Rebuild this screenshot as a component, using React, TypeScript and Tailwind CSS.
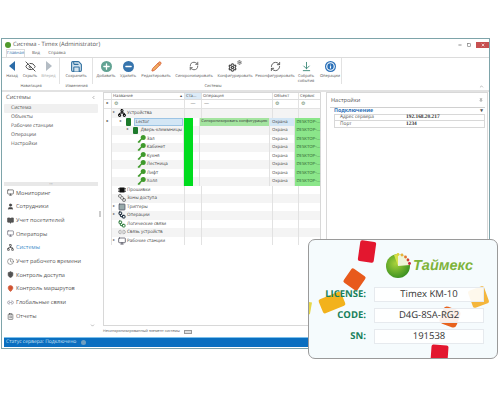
import {
  ArrowDownToLine,
  BookOpen,
  ChevronDown,
  ChevronLeft,
  ChevronUp,
  Clock,
  ClipboardList,
  EyeOff,
  Info,
  Link2,
  MapPin,
  Minus,
  Monitor,
  Network,
  Pencil,
  Pin,
  Plus,
  RefreshCw,
  Save,
  Settings,
  ShieldCheck,
  SquareStack,
  User,
  Workflow,
  X,
  Square,
} from "lucide-react";
import type { ReactNode } from "react";

const ribbon: { label: ReactNode; width: string; icon: ReactNode; sep?: boolean; muted?: boolean }[] = [
  { label: "Назад", width: "w-[20px]", icon: <div className="h-0 w-0 border-y-[5px] border-r-[6px] border-y-transparent border-r-[#2b6ca8]" /> },
  { label: "Скрыть", width: "w-[16px]", icon: <EyeOff size={11} className="text-[#444]" /> },
  { label: "Вперед", width: "w-[22px]", muted: true, sep: true, icon: <div className="h-0 w-0 border-y-[5px] border-l-[6px] border-y-transparent border-l-[#b4bcc4]" /> },
  { label: "Сохранить", width: "w-[33px]", sep: true, icon: <Save size={13} className="fill-[#d5e4ee] text-[#2f6f9f]" /> },
  { label: "Добавить", width: "w-[26px]", icon: <div className="flex h-[11px] w-[11px] items-center justify-center rounded-full bg-[#62a393]"><Plus size={9} strokeWidth={3.5} className="text-white" /></div> },
  { label: "Удалить", width: "w-[18px]", icon: <div className="flex h-[11px] w-[11px] items-center justify-center rounded-full bg-[#3674ad]"><Minus size={9} strokeWidth={3.5} className="text-white" /></div> },
  { label: "Редактировать", width: "w-[38px]", icon: <Pencil size={11} className="fill-[#f0b060] text-[#d9603a]" /> },
  { label: "Синхронизировать", width: "w-[38px]", icon: <RefreshCw size={10} className="text-[#555]" /> },
  {
    label: "Конфигурировать",
    width: "w-[44px]",
    icon: (
      <div className="flex items-start">
        <Settings size={9} strokeWidth={3} className="mt-[3px] text-[#444]" />
        <Settings size={5} strokeWidth={3} className="text-[#555]" />
      </div>
    ),
  },
  { label: "Реконфигурировать", width: "w-[36px]", icon: <RefreshCw size={11} className="text-[#555]" /> },
  { label: <>Собрать<br />события</>, width: "w-[26px]", icon: <ArrowDownToLine size={11} className="text-[#3d8a7a]" /> },
  { label: "Операции", width: "w-[23px]", sep: true, icon: <div className="flex h-[11px] w-[11px] items-center justify-center rounded-full bg-[#2a70b8]"><Info size={9} strokeWidth={3} className="text-white" /></div> },
];

const groups = [
  { label: "Навигация", width: "w-[58px]" },
  { label: "Изменения", width: "w-[33px]" },
  { label: "Системы", width: "w-[240px]" },
];

const sideItems = ["Система", "Объекты", "Рабочие станции", "Операции", "Настройки"];

const navItems: { label: string; icon: ReactNode; active?: boolean }[] = [
  { label: "Мониторинг", icon: <Monitor size={7} className="text-[#333]" /> },
  { label: "Сотрудники", icon: <User size={7} className="fill-[#444] text-[#444]" /> },
  { label: "Учет посетителей", icon: <BookOpen size={7} className="fill-[#555] text-[#444]" /> },
  { label: "Операторы", icon: <Monitor size={7} className="text-[#556]" /> },
  { label: "Системы", icon: <Network size={7} className="text-[#333]" />, active: true },
  { label: "Учет рабочего времени", icon: <Clock size={7} className="text-[#666]" /> },
  { label: "Контроль доступа", icon: <ShieldCheck size={7} className="fill-[#555] text-[#444]" /> },
  { label: "Контроль маршрутов", icon: <MapPin size={7} className="fill-[#d9603a] text-[#c8482c]" /> },
  { label: "Глобальные связи", icon: <Link2 size={7} className="text-[#778]" /> },
  { label: "Отчеты", icon: <ClipboardList size={7} className="text-[#444]" /> },
];

function Device({ tall }: { tall?: boolean }) {
  return <div className={tall ? "h-[8px] w-[5px] rounded-[1px] bg-[#1d7a2c]" : "h-[7px] w-[5px] rounded-[1px] bg-[#1d7a2c]"} />;
}

const keyIcon = (
  <svg width="9" height="8" viewBox="0 0 9 8">
    <circle cx="6.2" cy="2.6" r="2.5" fill="#3f9a2c" />
    <path d="M4.6 4 L1 7.4 M2.2 6.2 L3.2 7.2" stroke="#3f9a2c" strokeWidth="1.4" fill="none" />
  </svg>
);

const chipIcon = (
  <svg width="8" height="8" viewBox="0 0 8 8">
    <rect x="1.5" y="1.5" width="5" height="5" fill="#111" />
    <path d="M0 2.5H8M0 4H8M0 5.5H8" stroke="#111" strokeWidth="0.6" />
  </svg>
);

const rows: { label: string; indent: string; icon: ReactNode; arrow?: boolean; state?: boolean; selected?: boolean }[] = [
  { label: "Устройства", indent: "pl-[1px]", arrow: true, icon: <Network size={8} strokeWidth={3} className="text-black" /> },
  { label: "Lector", indent: "pl-[8px]", arrow: true, state: true, selected: true, icon: <Device tall /> },
  { label: "Дверь-клеммницы", indent: "pl-[15px]", arrow: true, state: true, icon: <Device /> },
  { label: "Зал", indent: "pl-[21px]", state: true, icon: keyIcon },
  { label: "Кабинет", indent: "pl-[21px]", state: true, icon: keyIcon },
  { label: "Кухня", indent: "pl-[21px]", state: true, icon: keyIcon },
  { label: "Лестница", indent: "pl-[21px]", state: true, icon: keyIcon },
  { label: "Лифт", indent: "pl-[21px]", state: true, icon: keyIcon },
  { label: "Холл", indent: "pl-[21px]", state: true, icon: keyIcon },
  { label: "Прошивки", indent: "pl-[1px]", icon: chipIcon },
  { label: "Зоны доступа", indent: "pl-[1px]", icon: <SquareStack size={8} className="text-[#333]" /> },
  { label: "Триггеры", indent: "pl-[1px]", arrow: true, icon: <Square size={8} className="fill-[#9aa] text-[#445]" /> },
  { label: "Операции", indent: "pl-[1px]", arrow: true, icon: <Workflow size={8} strokeWidth={3} className="text-[#123]" /> },
  { label: "Логические связи", indent: "pl-[1px]", icon: <Workflow size={8} strokeWidth={3} className="text-[#2a7a3a]" /> },
  { label: "Связь устройств", indent: "pl-[1px]", icon: <Link2 size={8} className="text-[#888]" /> },
  { label: "Рабочие станции", indent: "pl-[1px]", arrow: true, icon: <Monitor size={8} className="text-[#334]" /> },
];

const filterIcon = <span className="text-[5px] leading-none text-[#6a8a6a]">⚙</span>;

function Header() {
  return (
    <div className="flex h-[7px] border-b border-[#ddd] bg-white text-[4.2px] leading-[7px] text-[#444]">
      <div className="w-[8px] border-r border-[#e2e2e2]" />
      <div className="flex w-[73px] justify-between border-r border-[#e2e2e2] pl-[1px] pr-[2px]">
        <span>Название</span>
        <span>▴</span>
      </div>
      <div className="w-[17px] border-r border-[#e2e2e2] bg-[#dcebf7] pl-[1px]">Ста...</div>
      <div className="w-[71px] border-r border-[#e2e2e2] pl-[1px]">Операция</div>
      <div className="w-[26px] border-r border-[#e2e2e2] pl-[1px]">Объект</div>
      <div className="flex-1 pl-[1px]">Сервис</div>
    </div>
  );
}

function FilterRow() {
  return (
    <div className="flex h-[9px] items-center border-b border-[#e2e2e2] text-[5px] leading-none text-[#777]">
      <div className="flex h-full w-[8px] items-center justify-center border-r border-[#e2e2e2] text-[4px] text-[#333]">▸</div>
      <div className="flex h-full w-[73px] items-center border-r border-[#e2e2e2] pl-[2px]">{filterIcon}</div>
      <div className="flex h-full w-[17px] items-center justify-center border-r border-[#e2e2e2]">—</div>
      <div className="flex h-full w-[71px] items-center border-r border-[#e2e2e2] pl-[2px]">—</div>
      <div className="flex h-full w-[26px] items-center border-r border-[#e2e2e2] pl-[2px]">{filterIcon}</div>
      <div className="flex h-full flex-1 items-center pl-[2px]">{filterIcon}</div>
    </div>
  );
}

function TreeRow({ row, index }: { row: (typeof rows)[number]; index: number }) {
  return (
    <div className={`flex h-[8.5px] text-[4.5px] leading-[8.5px] text-[#444] ${index % 2 === 0 ? "bg-[#f4f4f4]" : "bg-white"}`}>
      <div className="flex w-[8px] items-center justify-center border-r border-[#e2e2e2] bg-white text-[4px] text-[#333]">{row.selected ? "▸" : ""}</div>
      <div className={`flex w-[73px] items-center gap-[1px] border-r border-[#e2e2e2] ${row.indent}`}>
        <span className="w-[3px] shrink-0 text-[4px] text-[#666]">{row.arrow ? "▸" : ""}</span>
        <span className="flex w-[9px] shrink-0 justify-center">{row.icon}</span>
        <span className={row.selected ? "flex-1 self-stretch border border-[#9cc4e4] bg-[#d3e6f5] pl-[1px] leading-[6.5px]" : ""}>{row.label}</span>
      </div>
      <div className="w-[17px] border-r border-[#e2e2e2]">
        {row.state && <div className="h-full w-[9px] bg-[#00dc1e]" />}
      </div>
      <div className={`w-[71px] whitespace-nowrap border-r border-[#e2e2e2] pl-[1px] text-[3.9px] ${row.selected ? "bg-[#a4e4a0] text-[#333]" : ""}`}>
        {row.selected ? "Синхронизировать конфигурацию" : ""}
      </div>
      <div className={`w-[26px] border-r border-[#e2e2e2] pl-[2px] text-[4.3px] ${row.selected ? "bg-[#d3e6f5]" : ""}`}>{row.state ? "Охрана" : ""}</div>
      <div className={`flex-1 pl-[1px] text-[4.3px] ${row.state ? "bg-[#8be68a] text-[#2c5a2c]" : ""}`}>{row.state ? "DESKTOP-..." : ""}</div>
    </div>
  );
}

function LicenseCard() {
  const fields = [
    { label: "LICENSE:", value: "Timex KM-10" },
    { label: "CODE:", value: "D4G-8SA-RG2" },
    { label: "SN:", value: "191538" },
  ];
  return (
    <div className="absolute left-[308px] top-[239px] h-[120px] w-[190px] overflow-hidden rounded-[7px] border border-[#9a9a9a] bg-[#f5fbfd]">
      <div className="absolute left-[50px] top-[1px] h-[21px] w-[16px] rotate-[8deg] rounded-[2px] bg-[#e3172f]" />
      <div className="absolute left-[37px] top-[31px] h-[17px] w-[17px] rotate-[35deg] rounded-[2px] bg-[#e85a1c]" />
      <div className="absolute left-[11px] top-[55px] h-[15px] w-[24px] rotate-[-22deg] rounded-[2px] bg-[#f2b21c]" />
      <div className="absolute left-[-3px] top-[62px] h-[12px] w-[5px] rotate-[10deg] bg-[#e6d84a]" />
      <div className="absolute left-[161px] top-[48px] h-[18px] w-[17px] rotate-[-20deg] rounded-[2px] bg-[#f4b63c]" />
      <div className="absolute left-[132px] top-[68px] h-[18px] w-[18px] rotate-[20deg] rounded-[4px] bg-[#e8621c]" />
      <div className="absolute left-[122px] top-[105px] h-[18px] w-[17px] rotate-[4deg] rounded-[2px] bg-[#e3172f]" />

      <div className="relative flex h-[44px] items-center pl-[76px] pt-[6px]">
        <svg width="26" height="26" viewBox="0 0 26 26" className="shrink-0">
          <defs>
            <radialGradient id="lg" cx="40%" cy="40%" r="70%">
              <stop offset="0%" stopColor="#a6d13a" />
              <stop offset="100%" stopColor="#2f8a1e" />
            </radialGradient>
          </defs>
          <circle cx="13" cy="14" r="12" fill="url(#lg)" />
          <path d="M13 14 L13 2 A12 12 0 0 1 25 13 Z" fill="#eef4d8" />
          <path d="M13 14 L9 3 A12 12 0 0 1 13 2 Z" fill="#d8e24a" />
          <circle cx="13" cy="2.5" r="1.4" fill="#e2d23c" />
          <circle cx="17" cy="3" r="1.4" fill="#e8b23c" />
          <circle cx="20.5" cy="5" r="1.4" fill="#e8732c" />
          <circle cx="23" cy="8" r="1.4" fill="#d83a34" />
          <circle cx="24.5" cy="11.5" r="1.4" fill="#c81e3a" />
        </svg>
        <span className="ml-[2px] mt-[3px] font-['Liberation_Sans',sans-serif] text-[14.5px] font-bold italic leading-none text-[#7db33a]">Таймекс</span>
      </div>

      <div className="relative mt-[3px] flex flex-col gap-[6px]">
        {fields.map((f) => (
          <div key={f.label} className="flex h-[15px] items-center">
            <div className="w-[57px] text-right font-['Open_Sans',sans-serif] text-[9.5px] font-bold text-[#18805c]">{f.label}</div>
            <div className="ml-[8px] flex h-full w-[110px] items-center justify-center border border-[#e6eaee] bg-white/90 font-['Open_Sans',sans-serif] text-[9.5px] text-[#333]">
              {f.value}
            </div>
          </div>
        ))}
      </div>
    </div>
  );
}

export default function App() {
  return (
    <div className="relative h-[400px] w-[500px] overflow-hidden bg-white pl-[1px] pt-[38px] font-['Open_Sans',sans-serif] [text-rendering:geometricPrecision]">
      <div className="flex h-[311px] w-[489px] flex-col border border-[#7ea4aa] bg-white">
        {/* title */}
        <div className="flex h-[11px] shrink-0 items-center bg-white pl-[3px] text-[5.8px] text-[#555]">
          <div className="mr-[2px] h-[6px] w-[6px] rounded-full bg-[#4f9a2c]" />
          Система - Timex (Administrator)
          <div className="ml-auto flex items-center gap-[5px] text-[#555]">
            <Minus size={4} strokeWidth={4} />
            <Square size={4} strokeWidth={3} />
            <div className="flex h-[6px] w-[13px] items-center justify-center bg-[#c75050]">
              <X size={4} strokeWidth={4} className="text-white" />
            </div>
          </div>
        </div>
        {/* tabs */}
        <div className="flex h-[8px] shrink-0 items-end border-b border-[#dcdcdc] pl-[4px] text-[4.3px] leading-[7px] text-[#555]">
          <div className="w-[19px] border-x border-t border-[#dcdcdc] text-center text-[#2b6ca8]">Главная</div>
          <div className="ml-[4px] w-[14px] text-center">Вид</div>
          <div className="ml-[3px] w-[22px] text-center">Справка</div>
        </div>
        {/* ribbon */}
        <div className="relative flex h-[32px] shrink-0 flex-col bg-white">
          <div className="flex h-[26px]">
            {ribbon.map((b, i) => (
              <div
                key={i}
                className={`flex flex-col items-center ${b.width} ${b.sep ? "border-r border-[#e2e2e2]" : ""}`}
              >
                <div className="flex h-[16px] items-center justify-center">{b.icon}</div>
                <div className={`text-center text-[4px] leading-[5px] whitespace-nowrap ${b.muted ? "text-[#aaa]" : "text-[#555]"}`}>{b.label}</div>
              </div>
            ))}
          </div>
          <div className="flex text-[4px] leading-[6px] text-[#555]">
            {groups.map((g) => (
              <div key={g.label} className={`${g.width} text-center`}>{g.label}</div>
            ))}
          </div>
          <ChevronUp size={5} className="absolute bottom-[1px] right-[5px] text-[#666]" />
        </div>
        {/* content */}
        <div className="flex min-h-0 flex-1 border-t-2 border-[#e2e2e2]">
          {/* sidebar */}
          <div className="flex w-[96px] shrink-0 flex-col pl-[2px]">
            <div className="flex h-[10px] items-center justify-between px-[2px] text-[5.8px] text-[#555]">
              Системы
              <ChevronLeft size={5} className="text-[#555]" />
            </div>
            <div className="mt-[1.5px] flex flex-col">
              {sideItems.map((s, i) => (
                <div key={s} className={`h-[9px] rounded-[1px] pl-[7px] text-[5px] leading-[9px] text-[#555] ${i === 0 ? "bg-[#f0f0f0]" : ""}`}>{s}</div>
              ))}
            </div>
            <div className="mt-[33.5px] flex h-[4px] items-center justify-center bg-[#e8e8e8] text-[3px] leading-none text-[#888]">•••</div>
            <div className="flex flex-col">
              {navItems.map((n) => (
                <div key={n.label} className={`flex h-[13.7px] items-center gap-[2px] pl-[2px] text-[5.6px] ${n.active ? "text-[#3a8ac8]" : "text-[#555]"}`}>
                  <span className="flex w-[8px] justify-center">{n.icon}</span>
                  {n.label}
                </div>
              ))}
            </div>
            <div className="flex flex-1 justify-end pr-[3px]">
              <ChevronDown size={5} className="text-[#666]" />
            </div>
          </div>
          {/* splitter */}
          <div className="w-[5px] shrink-0 pl-[1px] pt-[119px]">
            <div className="h-[6px] w-[2px] bg-[#ccc]" />
          </div>
          {/* grid */}
          <div className="flex w-[218px] shrink-0 flex-col">
            <div className="flex-1 border border-[#d8d8d8]">
              <Header />
              <FilterRow />
              {rows.map((r, i) => (
                <TreeRow key={r.label} row={r} index={i} />
              ))}
            </div>
            <div className="flex h-[11px] items-center gap-[4px] whitespace-nowrap text-[3.7px] text-[#555]">
              Несинхронизированный элемент системы
              <div className="h-[4px] w-[8px] border border-[#999] bg-[#ddd]" />
            </div>
          </div>
          {/* settings */}
          <div className="ml-[5px] flex w-[162px] shrink-0 flex-col pb-[11px]">
            <div className="flex-1 border border-[#d8d8d8] px-[1px]">
              <div className="flex h-[14px] items-center justify-between px-[3px] text-[5.6px] text-[#555]">
                Настройки
                <Pin size={4} className="text-[#555]" />
              </div>
              <div className="ml-[2px] mr-[1px] border-t border-[#d0d0d0]">
                <div className="flex h-[6px] items-center justify-between pl-[4px] pr-[2px] text-[5.3px] font-bold text-[#2a70b8]">
                  Подключение
                  <span className="text-[#555]">▾</span>
                </div>
                <div className="ml-[4px] flex h-[7px] border border-[#d8d8d8] text-[4.8px] leading-[5px] text-[#555]">
                  <div className="w-[71px] pl-[5px]">Адрес сервера</div>
                  <div className="font-['Liberation_Serif',serif] text-[5.4px] font-bold text-[#333]">192.168.20.217</div>
                </div>
                <div className="ml-[4px] flex h-[7px] border-x border-b border-[#d8d8d8] text-[4.8px] leading-[6px] text-[#555]">
                  <div className="w-[71px] pl-[5px]">Порт</div>
                  <div className="font-['Liberation_Serif',serif] text-[5.4px] font-bold text-[#333]">1234</div>
                </div>
              </div>
            </div>
          </div>
        </div>
        {/* status */}
        <div className="mx-[2px] mb-[1px] flex h-[10px] shrink-0 items-center border-t border-[#7cc0ec] bg-[#0a6fc0] pl-[2px] text-[5px] text-[#cfe4f6]">
          Статус сервера: Подключено
          <div className="ml-[5px] h-[5px] w-[5px] rounded-full bg-[#6f9fc0]" />
        </div>
      </div>
      <LicenseCard />
    </div>
  );
}
